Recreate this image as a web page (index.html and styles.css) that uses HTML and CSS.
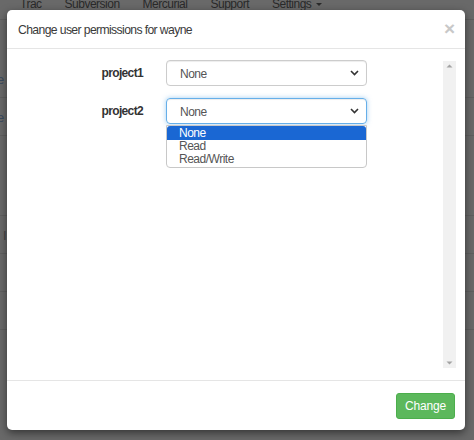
FILE: index.html
```html
<!DOCTYPE html>
<html>
<head>
<meta charset="utf-8">
<link rel="stylesheet" href="styles.css">
</head>
<body>
<div class="page">
  <nav class="nav">
    <span>Trac</span><span>Subversion</span><span>Mercurial</span><span>Support</span><span>Settings <i class="caret"></i></span>
  </nav>
  <div class="bg-rows">
    <div class="bg-row"><span class="bg-link">e</span></div>
    <div class="bg-row"><span class="bg-link">e</span></div>
    <div class="bg-row tall"></div>
    <div class="bg-row"><span class="bg-mark">I</span></div>
    <div class="bg-row"></div>
    <div class="bg-row"></div>
  </div>
</div>

<div class="modal">
  <div class="modal-header">
    <span class="modal-title">Change user permissions for wayne</span>
    <span class="close">&times;</span>
  </div>
  <div class="modal-body">
    <div class="form">
      <div class="form-row">
        <label class="label">project1</label>
        <div class="select">
          <span>None</span>
          <svg class="chev" width="9" height="6" viewBox="0 0 9 6"><path d="M1 1 L4.5 4.5 L8 1" fill="none" stroke="#333" stroke-width="1.6"/></svg>
        </div>
      </div>
      <div class="form-row">
        <label class="label">project2</label>
        <div class="select-wrap">
          <div class="select focus">
            <span>None</span>
            <svg class="chev" width="9" height="6" viewBox="0 0 9 6"><path d="M1 1 L4.5 4.5 L8 1" fill="none" stroke="#333" stroke-width="1.6"/></svg>
          </div>
          <ul class="listbox">
            <li class="sel">None</li>
            <li>Read</li>
            <li>Read/Write</li>
          </ul>
        </div>
      </div>
    </div>
    <div class="scrollbar">
      <svg width="13" height="10" viewBox="0 0 13 10"><path d="M3.5 6.5 L6.5 3.5 L9.5 6.5 Z" fill="#a3a3a3"/></svg>
      <div class="track"></div>
      <svg width="13" height="10" viewBox="0 0 13 10"><path d="M3.5 3.5 L6.5 6.5 L9.5 3.5 Z" fill="#a3a3a3"/></svg>
    </div>
  </div>
  <div class="modal-footer">
    <button class="btn">Change</button>
  </div>
</div>
</body>
</html>
```

FILE: styles.css
```css
* { box-sizing: border-box; }
html, body { margin: 0; padding: 0; }
body {
  width: 474px;
  height: 440px;
  overflow: hidden;
  background: #696969;
  font-family: "Liberation Sans", Arial, sans-serif;
  letter-spacing: -0.5px;
  position: relative;
}
.page { height: 440px; }
.nav {
  display: flex;
  height: 22px;
  padding-left: 20px;
  font-size: 12px;
  color: #2a2a2a;
  line-height: 12px;
  margin-top: -2px;
  border-bottom: 1px solid #5e5e5e;
}
.nav span { margin-right: 23px; }
.caret {
  display: inline-block;
  width: 0; height: 0;
  border-left: 3px solid transparent;
  border-right: 3px solid transparent;
  border-top: 3px solid #2a2a2a;
  vertical-align: middle;
  margin-left: 2px;
}
.bg-rows { padding-top: 40px; }
.bg-row {
  height: 38px;
  border-bottom: 1px solid #5f5f5f;
  font-size: 13px;
  color: #3a4a5e;
  padding-top: 12px;
}
.bg-row.tall { height: 80px; }
.bg-link { margin-left: -3px; }
.bg-mark { margin-left: 3px; color: #444; }

.modal {
  position: absolute;
  left: 7px;
  top: 10px;
  width: 458px;
  height: 420px;
  background: #fff;
  border-radius: 5px;
  box-shadow: 0 3px 9px rgba(0,0,0,0.5);
  display: flex;
  flex-direction: column;
  color: #333;
}
.modal-header {
  height: 39px;
  border-bottom: 1px solid #e5e5e5;
  display: flex;
  align-items: center;
  justify-content: space-between;
  padding: 0 10px 0 11px;
  flex: none;
}
.modal-title { font-size: 12.2px; color: #3a3a3a; margin-top: 1px; letter-spacing: -0.62px; }
.close {
  font-size: 19px;
  font-weight: bold;
  color: #c8c8c8;
  line-height: 1;
  margin-top: -1px;
  letter-spacing: 0;
}
.modal-body {
  flex: 1;
  display: flex;
  justify-content: space-between;
  padding: 11px 9px 11px 0;
}
.form {
  display: flex;
  flex-direction: column;
  gap: 12px;
}
.form-row {
  display: flex;
  align-items: flex-start;
}
.label {
  width: 136px;
  text-align: right;
  font-weight: bold;
  font-size: 12px;
  color: #333;
  line-height: 26px;
  margin-right: 23px;
  letter-spacing: -0.65px;
}
.select-wrap { position: relative; }
.select {
  width: 201px;
  height: 26px;
  border: 1px solid #ccc;
  border-radius: 4px;
  display: flex;
  align-items: center;
  justify-content: space-between;
  padding: 0 7px 0 13px;
  font-size: 12px;
  color: #555;
  box-shadow: inset 0 1px 1px rgba(0,0,0,0.075);
}
.select span { margin-top: 1px; }
.select.focus {
  border-color: #66afe9;
  box-shadow: inset 0 1px 1px rgba(0,0,0,0.075), 0 0 5px rgba(102,175,233,0.6);
}
.chev { display: block; }
.listbox {
  position: absolute;
  left: 0;
  top: 27px;
  width: 201px;
  margin: 0;
  padding: 0 0 1px;
  list-style: none;
  background: #fff;
  border: 1px solid #c8c8c8;
  border-radius: 0 0 4px 4px;
  font-size: 12px;
  color: #555;
}
.listbox li {
  height: 13px;
  line-height: 13px;
  padding-left: 12px;
}
.listbox li.sel {
  background: #1a67d3;
  color: #fff;
  border-radius: 3px 3px 0 0;
  height: 14px;
  line-height: 14px;
}
.scrollbar {
  width: 13px;
  margin-top: 1px;
  margin-bottom: 1px;
  background: #f1f1f1;
  display: flex;
  flex-direction: column;
  align-items: center;
}
.scrollbar svg { display: block; flex: none; }
.track { flex: 1; }
.modal-footer {
  height: 50px;
  border-top: 1px solid #e5e5e5;
  display: flex;
  align-items: center;
  justify-content: flex-end;
  padding: 0 10px 0 0;
  flex: none;
}
.btn {
  background: #5cb85c;
  border: 1px solid #4cae4c;
  color: #fff;
  font-family: "Liberation Sans", Arial, sans-serif;
  font-size: 12px;
  letter-spacing: -0.2px;
  border-radius: 3px;
  width: 59px;
  height: 26px;
  padding: 0;
  margin-top: 1px;
}
```
